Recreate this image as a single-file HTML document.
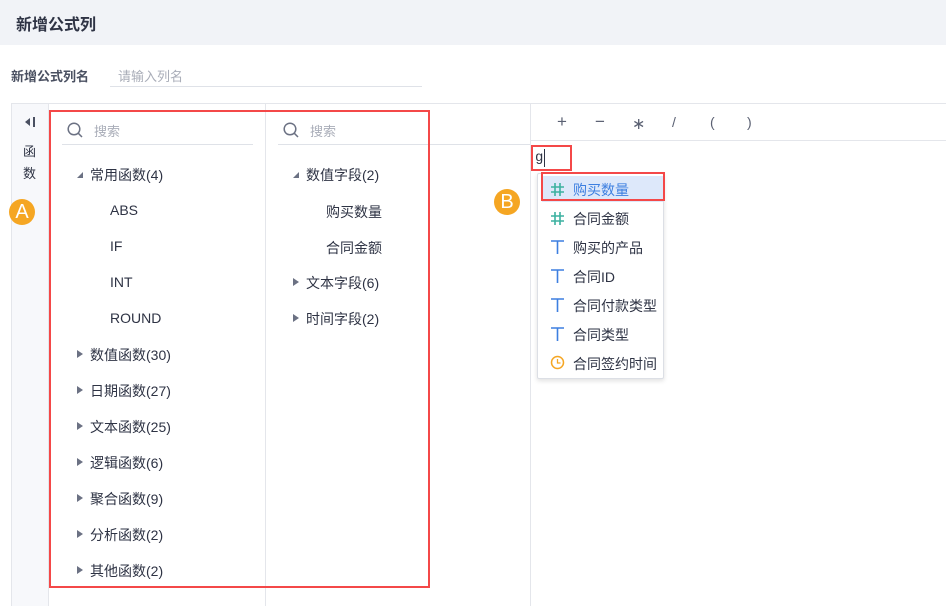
<!DOCTYPE html>
<html><head><meta charset="utf-8"><style>
*{margin:0;padding:0;box-sizing:border-box}
body{width:946px;height:606px;overflow:hidden;background:#fff;font-family:"Liberation Sans","Noto Sans CJK SC",sans-serif;color:#2e3344;position:relative;font-size:14px}
.a{position:absolute}
.hdr{left:0;top:0;width:946px;height:45px;background:#f1f3f7}
.t{white-space:nowrap}
.tri{display:block;width:0;height:0}
.right{border-left:6px solid #6b7183;border-top:4px solid transparent;border-bottom:4px solid transparent}
.circ{width:26px;height:26px;border-radius:50%;background:#f5a623;color:#fff;font-size:20px;text-align:center;line-height:26px}
.dd .it{position:absolute;left:14px;font-size:14px;white-space:nowrap}
</style></head><body>
<div class="a hdr"></div>
<div class="a t" style="left:16px;top:11px;font-size:16px;font-weight:bold;color:#2e3344">新增公式列</div>
<div class="a t" style="left:11px;top:66px;font-size:13px;color:#4a5061;font-weight:bold">新增公式列名</div>
<div class="a t" style="left:118px;top:66px;font-size:13px;color:#a9adb8">请输入列名</div>
<div class="a" style="left:110px;top:86px;width:312px;height:1px;background:#dfe2e8"></div>
<div class="a" style="left:11px;top:103px;width:935px;height:1px;background:#e4e6eb"></div>
<div class="a" style="left:11px;top:103px;width:1px;height:503px;background:#e4e6eb"></div>
<div class="a" style="left:12px;top:104px;width:36px;height:502px;background:#f7f8fb"></div>
<div class="a" style="left:48px;top:104px;width:1px;height:502px;background:#e4e6eb"></div>
<div class="a" style="left:265px;top:104px;width:1px;height:502px;background:#e4e6eb"></div>
<div class="a" style="left:530px;top:104px;width:1px;height:502px;background:#e4e6eb"></div>
<div class="a" style="left:531px;top:140px;width:415px;height:1px;background:#e4e6eb"></div>
<svg class="a" style="left:24px;top:116px" width="12" height="12"><path d="M1 6 L6 2 L6 10 Z" fill="#4a5061"/><rect x="9" y="1" width="2" height="10" fill="#4a5061"/></svg>
<div class="a t" style="left:23px;top:141px;font-size:13px;line-height:22px;color:#2e3344">函<br>数</div>
<div class="a circ" style="left:9px;top:199px">A</div>
<svg class="a" style="left:67px;top:122px" width="16" height="16"><circle cx="7" cy="7" r="5.8" fill="none" stroke="#6b7183" stroke-width="1.5"/><line x1="11.2" y1="11.2" x2="15" y2="15" stroke="#6b7183" stroke-width="1.5"/></svg>
<div class="a t" style="left:94px;top:121px;font-size:13px;color:#a9adb8">搜索</div>
<div class="a" style="left:62px;top:144px;width:191px;height:1px;background:#dfe2e8"></div>
<svg class="a" style="left:283px;top:122px" width="16" height="16"><circle cx="7" cy="7" r="5.8" fill="none" stroke="#6b7183" stroke-width="1.5"/><line x1="11.2" y1="11.2" x2="15" y2="15" stroke="#6b7183" stroke-width="1.5"/></svg>
<div class="a t" style="left:310px;top:121px;font-size:13px;color:#a9adb8">搜索</div>
<div class="a" style="left:278px;top:144px;width:252px;height:1px;background:#dfe2e8"></div>
<svg class="a" style="left:76px;top:171px" width="8" height="8"><path d="M7 1 L7 7 L1 7 Z" fill="#6b7183"/></svg>
<div class="a t" style="left:90px;top:165px">常用函数(4)</div>
<div class="a t" style="left:110px;top:202px">ABS</div>
<div class="a t" style="left:110px;top:238px">IF</div>
<div class="a t" style="left:110px;top:274px">INT</div>
<div class="a t" style="left:110px;top:310px">ROUND</div>
<div class="a" style="left:77px;top:350px"><span class="tri right"></span></div><div class="a t" style="left:90px;top:345px">数值函数(30)</div>
<div class="a" style="left:77px;top:386px"><span class="tri right"></span></div><div class="a t" style="left:90px;top:381px">日期函数(27)</div>
<div class="a" style="left:77px;top:422px"><span class="tri right"></span></div><div class="a t" style="left:90px;top:417px">文本函数(25)</div>
<div class="a" style="left:77px;top:458px"><span class="tri right"></span></div><div class="a t" style="left:90px;top:453px">逻辑函数(6)</div>
<div class="a" style="left:77px;top:494px"><span class="tri right"></span></div><div class="a t" style="left:90px;top:489px">聚合函数(9)</div>
<div class="a" style="left:77px;top:530px"><span class="tri right"></span></div><div class="a t" style="left:90px;top:525px">分析函数(2)</div>
<div class="a" style="left:77px;top:566px"><span class="tri right"></span></div><div class="a t" style="left:90px;top:561px">其他函数(2)</div>
<svg class="a" style="left:292px;top:171px" width="8" height="8"><path d="M7 1 L7 7 L1 7 Z" fill="#6b7183"/></svg>
<div class="a t" style="left:306px;top:165px">数值字段(2)</div>
<div class="a t" style="left:326px;top:202px">购买数量</div>
<div class="a t" style="left:326px;top:238px">合同金额</div>
<div class="a" style="left:293px;top:278px"><span class="tri right"></span></div><div class="a t" style="left:306px;top:273px">文本字段(6)</div>
<div class="a" style="left:293px;top:314px"><span class="tri right"></span></div><div class="a t" style="left:306px;top:309px">时间字段(2)</div>
<div class="a" style="left:49px;top:110px;width:381px;height:478px;border:2px solid #f44848"></div>
<div class="a t" style="left:557px;top:112px;font-size:17px;color:#5a6072">+</div>
<div class="a t" style="left:595px;top:112px;font-size:17px;color:#5a6072">−</div>
<div class="a t" style="left:632px;top:114px;font-size:16px;color:#5a6072">∗</div>
<div class="a t" style="left:672px;top:114px;font-size:14px;color:#5a6072">/</div>
<div class="a t" style="left:710px;top:114px;font-size:14px;color:#5a6072">(</div>
<div class="a t" style="left:747px;top:114px;font-size:14px;color:#5a6072">)</div>
<div class="a t" style="left:535px;top:150px;font-size:14px;color:#2e3344;font-family:'Liberation Mono',monospace">g</div>
<div class="a" style="left:544px;top:149px;width:1px;height:18px;background:#2e3344"></div>
<div class="a" style="left:531px;top:145px;width:41px;height:26px;border:2px solid #f44848"></div>
<div class="a circ" style="left:494px;top:189px">B</div>
<div class="a dd" style="left:537px;top:173px;width:127px;height:206px;background:#fff;border:1px solid #dcdfe5;border-radius:2px;box-shadow:0 2px 5px rgba(0,0,0,.12)">
 <div class="a" style="left:4px;top:2px;width:121px;height:26px;background:#dde8fa"></div>
 <svg class="a" style="left:13px;top:9px" width="13" height="13"><path d="M4 0v13M9 0v13M0 4h13M0 9h13" stroke="#3cb1a0" stroke-width="1.6"/></svg><div class="it" style="left:35px;top:6px;color:#3d7fe0">购买数量</div>
 <svg class="a" style="left:13px;top:38px" width="13" height="13"><path d="M4 0v13M9 0v13M0 4h13M0 9h13" stroke="#3cb1a0" stroke-width="1.6"/></svg><div class="it" style="left:35px;top:35px">合同金额</div>
 <svg class="a" style="left:13px;top:66px" width="13" height="14"><path d="M0 1h13M6.5 1v13" stroke="#3d7fe0" stroke-width="1.6"/></svg><div class="it" style="left:35px;top:64px">购买的产品</div>
 <svg class="a" style="left:13px;top:95px" width="13" height="14"><path d="M0 1h13M6.5 1v13" stroke="#3d7fe0" stroke-width="1.6"/></svg><div class="it" style="left:35px;top:93px">合同ID</div>
 <svg class="a" style="left:13px;top:124px" width="13" height="14"><path d="M0 1h13M6.5 1v13" stroke="#3d7fe0" stroke-width="1.6"/></svg><div class="it" style="left:35px;top:122px">合同付款类型</div>
 <svg class="a" style="left:13px;top:153px" width="13" height="14"><path d="M0 1h13M6.5 1v13" stroke="#3d7fe0" stroke-width="1.6"/></svg><div class="it" style="left:35px;top:151px">合同类型</div>
 <svg class="a" style="left:12px;top:181px" width="15" height="15"><circle cx="7.5" cy="7.5" r="6" fill="none" stroke="#f5a623" stroke-width="1.5"/><path d="M7.5 4v4h3" fill="none" stroke="#f5a623" stroke-width="1.3"/></svg>
 <div class="it" style="left:35px;top:180px">合同签约时间</div>
</div>
<div class="a" style="left:541px;top:172px;width:124px;height:29px;border:2px solid #f44848"></div>
</body></html>
